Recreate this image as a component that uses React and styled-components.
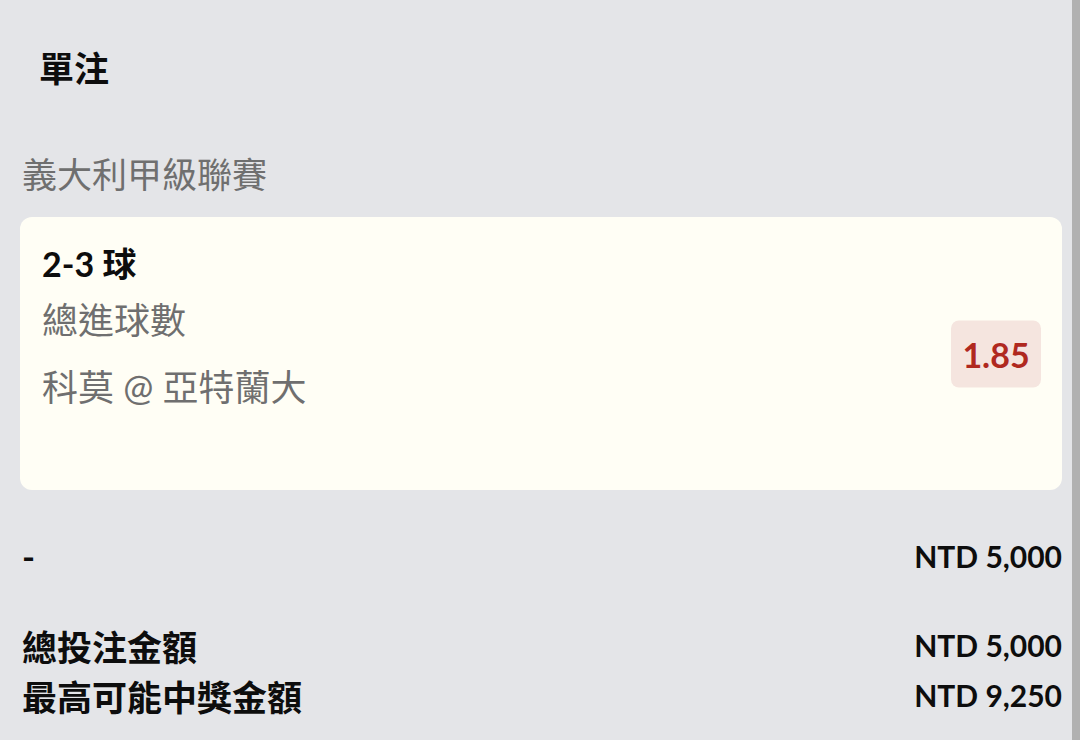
import React from 'react';
import styled, { createGlobalStyle } from 'styled-components';

const GlobalStyle = createGlobalStyle`
  html, body {
    margin: 0;
    padding: 0;
    background: #e4e5e8;
  }
  body {
    font-family: "Lato", "Noto Sans CJK TC", sans-serif;
    color: #111;
  }
`

const Screen = styled.div`
  display: flex;
  width: 1080px;
  height: 740px;
  overflow: hidden;
  background: #e4e5e8;
`

const Content = styled.div`
  flex: 1;
  display: flex;
  flex-direction: column;
  padding: 0 10px 0 20px;
`

const ScrollTrack = styled.div`
  width: 8px;
  background: #b1b1b1;
`

const Heading = styled.h2`
  margin: 0;
  padding: 44px 0 0 19px;
  font-size: 35px;
  line-height: 48px;
  font-weight: 700;
  color: #0d0d0d;
`

const League = styled.div`
  margin-top: 58px;
  padding-left: 2px;
  font-size: 35px;
  line-height: 48px;
  color: #6f6f6f;
`

const Card = styled.div`
  margin-top: 19px;
  display: flex;
  align-items: center;
  justify-content: space-between;
  background: #fffef5;
  border-radius: 12px;
  padding: 27px 21px 79px 22px;
  height: 273px;
  box-sizing: border-box;
  position: relative;
`

const Selection = styled.div`
  display: flex;
  flex-direction: column;
  align-self: flex-start;
`

const Pick = styled.div`
  font-size: 34px;
  line-height: 40px;
  font-weight: 700;
  color: #0d0d0d;
`

const Detail = styled.div`
  margin-top: ${p => p.gap}px;
  font-size: 36px;
  line-height: 48px;
  color: #6f6f6f;
`

const OddsBadge = styled.div`
  position: absolute;
  right: 21px;
  top: 50%;
  transform: translateY(-50%);
  width: 90px;
  height: 67px;
  display: flex;
  align-items: center;
  justify-content: center;
  border-radius: 8px;
  background: #f5e5df;
  color: #b0291f;
  font-size: 34px;
  font-weight: 700;
`

const Row = styled.div`
  display: flex;
  justify-content: space-between;
  align-items: center;
  margin-top: ${p => p.gap || 0}px;
  padding-left: 2px;
  height: ${p => p.h || 50}px;
`

const Label = styled.div`
  font-size: 35px;
  font-weight: 700;
  color: #0d0d0d;
`

const Amount = styled.div`
  font-size: 30px;
  font-weight: 700;
  color: #0d0d0d;
`

export default function App() {
  return (
    <>
      <GlobalStyle />
      <Screen>
        <Content>
          <Heading>單注</Heading>
          <League>義大利甲級聯賽</League>
          <Card>
            <Selection>
              <Pick>2-3 球</Pick>
              <Detail gap={12}>總進球數</Detail>
              <Detail gap={19}>科莫 @ 亞特蘭大</Detail>
            </Selection>
            <OddsBadge>1.85</OddsBadge>
          </Card>
          <Row gap={46} h={40}>
            <Label>-</Label>
            <Amount>NTD 5,000</Amount>
          </Row>
          <Row gap={44}>
            <Label>總投注金額</Label>
            <Amount>NTD 5,000</Amount>
          </Row>
          <Row>
            <Label>最高可能中獎金額</Label>
            <Amount>NTD 9,250</Amount>
          </Row>
        </Content>
        <ScrollTrack />
      </Screen>
    </>
  );
}
